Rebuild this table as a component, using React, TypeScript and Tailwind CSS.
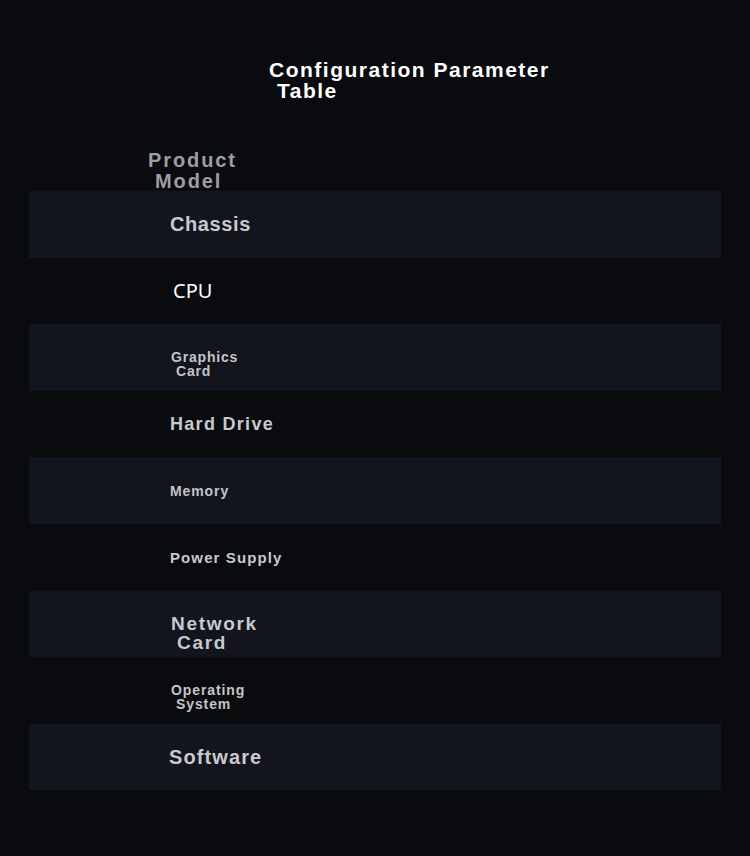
const ROWS = [
  { label: 'Chassis', cls: 'text-[20px] tracking-[0.6px] leading-[20px] text-[#c9c9cd]', h: 'h-[20px]', w: 'w-[200px]', pl: 'pl-[141px]' },
  { label: 'CPU', cls: "font-['Noto_Sans'] font-normal text-[20px] leading-[22px] text-white", h: 'h-[22px]', w: 'w-[200px]', pl: 'pl-[144px]' },
  { label: 'Graphics Card', cls: 'text-[14px] tracking-[0.8px] leading-[14px] text-[#c4c4c8] pl-[5px] indent-[-5px]', h: 'h-[14px]', w: 'w-[80px]', pl: 'pl-[142px]' },
  { label: 'Hard Drive', cls: 'text-[18px] tracking-[1.3px] leading-[18px] text-[#c9c9cd]', h: 'h-[18px]', w: 'w-[200px]', pl: 'pl-[141px]' },
  { label: 'Memory', cls: 'text-[14px] tracking-[0.9px] leading-[14px] text-[#c4c4c8]', h: 'h-[14px]', w: 'w-[200px]', pl: 'pl-[141px]' },
  { label: 'Power Supply', cls: 'text-[15px] tracking-[1.1px] leading-[15px] text-[#c9c9cd]', h: 'h-[15px]', w: 'w-[200px]', pl: 'pl-[141px]' },
  { label: 'Network Card', cls: 'text-[19px] tracking-[1.7px] leading-[19px] text-[#c9c9cd] pl-[6px] indent-[-6px]', h: 'h-[19px]', w: 'w-[105px]', pl: 'pl-[142px]' },
  { label: 'Operating System', cls: 'text-[14px] tracking-[0.9px] leading-[14px] text-[#c4c4c8] pl-[5px] indent-[-5px]', h: 'h-[14px]', w: 'w-[90px]', pl: 'pl-[142px]' },
  { label: 'Software', cls: 'text-[20px] tracking-[1.1px] leading-[20px] text-[#c9c9cd]', h: 'h-[20px]', w: 'w-[200px]', pl: 'pl-[140px]' },
]

export default function App() {
  return (
    <div className="min-h-[856px] w-[750px] bg-[#0a0b0f] font-['Liberation_Sans',Arial,sans-serif] font-bold">
      <div className="pt-[59px] pl-[269px]">
        <h1 className="w-[310px] pl-[8px] indent-[-8px] text-[21px] leading-[21px] tracking-[1.5px] text-white">
          Configuration Parameter Table
        </h1>
      </div>

      <div className="mt-[49px] pl-[148px]">
        <div className="w-[105px] pl-[7px] indent-[-7px] text-[20px] leading-[20.5px] tracking-[1.9px] text-[#9e9ea2]">
          Product Model
        </div>
      </div>

      <div className="mx-[29px] w-[692px]">
        {ROWS.map((row, index) => (
          <div
            key={row.label}
            className={`flex h-[66.6px] items-center ${row.pl} ${
              index % 2 === 0 ? 'bg-[#12151d]' : 'bg-transparent'
            }`}
          >
            {/* first line stays centred, a wrapped second line hangs below */}
            <div className={`${row.w} ${row.h} overflow-visible`}>
              <div className={row.cls}>{row.label}</div>
            </div>
          </div>
        ))}
      </div>
    </div>
  )
}
